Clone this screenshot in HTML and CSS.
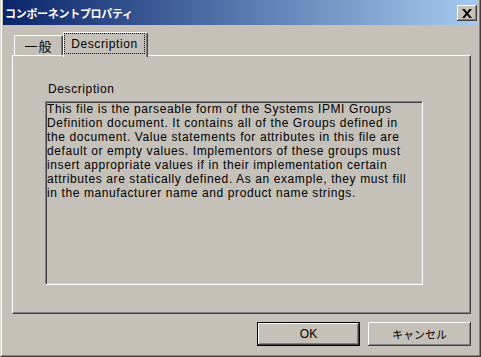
FILE: index.html
```html
<!DOCTYPE html>
<html lang="ja">

<head>
    <meta charset="UTF-8">
    <title>コンポーネントプロパティ</title>
    <link rel="stylesheet" href="styles.css">
</head>

<body>
    <div class="window">
        <div class="frame">
            <div class="titlebar">
                <span class="title">コンポーネントプロパティ</span>
                <button class="close" aria-label="閉じる">
                    <svg width="10" height="9" viewBox="0 0 10 9">
                        <path d="M0 0h2.5l2.5 3 2.5-3h2.5l-3.7 4.5 3.7 4.5h-2.5l-2.5-3-2.5 3h-2.5l3.7-4.5z" fill="#000" />
                    </svg>
                </button>
            </div>
            <div class="tabs">
                <div class="tab">一般</div>
                <div class="tab active"><span class="focus">Description</span></div>
            </div>
            <div class="panel">
                <div class="label">Description</div>
                <div class="textbox">This file is the parseable form of the Systems IPMI Groups<br>Definition document. It contains all of the Groups defined in<br>the document. Value statements for attributes in this file are<br>default or empty values. Implementors of these groups must<br>insert appropriate values if in their implementation certain<br>attributes are statically defined. As an example, they must fill<br>in the manufacturer name and product name strings.</div>
            </div>
            <div class="buttons">
                <button class="btn default">OK</button>
                <button class="btn jp">キャンセル</button>
            </div>
        </div>
    </div>
</body>

</html>
```

FILE: styles.css
```css
* {
    margin: 0;
    padding: 0;
    box-sizing: border-box;
}

body {
    background: #c5c1b9;
    font-family: "Liberation Sans", "Noto Sans CJK JP", sans-serif;
    font-size: 12px;
    letter-spacing: 0.6px;
    color: #000;
}

.window {
    width: 481px;
    height: 357px;
    border-left: 1px solid #d9d6d0;
    border-right: 1px solid #404040;
    border-bottom: 1px solid #404040;
}

.frame {
    height: 100%;
    display: flex;
    flex-direction: column;
    border-left: 1px solid #fff;
    border-right: 1px solid #808080;
    border-bottom: 1px solid #808080;
    padding: 0 1px 1px;
}

/* 标题栏 */
.titlebar {
    height: 25px;
    display: flex;
    justify-content: space-between;
    align-items: flex-start;
    padding: 2px 1px 0 2px;
    background: linear-gradient(to right, #0a246a, #a6caf0);
}

.titlebar .title {
    line-height: 23px;
    font-family: "Noto Sans CJK JP", sans-serif;
    font-size: 11px;
    font-weight: bold;
    letter-spacing: -0.3px;
    color: #fff;
}

.titlebar .close {
    width: 20px;
    height: 16px;
    margin-top: 3px;
    border: none;
    background: #c5c1b9;
    display: flex;
    align-items: center;
    justify-content: center;
    box-shadow: inset -1px -1px #404040, inset 1px 1px #fff, inset -2px -2px #808080;
}

/* 选项卡 */
.tabs {
    display: flex;
    height: 25px;
    margin: 7px 0 -2px 11px;
    position: relative;
    z-index: 1;
}

.tab {
    background: #c5c1b9;
    border-top: 1px solid #fff;
    border-left: 1px solid #fff;
    border-right: 1px solid #404040;
    border-radius: 2px 2px 0 0;
    box-shadow: inset -1px 0 #808080;
}

.tabs .tab:first-child {
    width: 49px;
    height: 20px;
    margin-top: 3px;
    line-height: 19px;
    text-align: center;
    font-family: "Noto Sans CJK JP", sans-serif;
    font-size: 13px;
    letter-spacing: 1px;
}

.tab.active {
    width: 85px;
    height: 25px;
    padding: 0 2px 0 0;
}

.tab.active .focus {
    display: flex;
    align-items: center;
    justify-content: center;
    height: 21px;
    border: 1px dotted #000;
}

/* 面板 */
.panel {
    height: 259px;
    margin: 0 7px 0 9px;
    padding: 26px 0 0 32px;
    border-top: 1px solid #fff;
    border-left: 1px solid #fff;
    border-right: 1px solid #404040;
    border-bottom: 1px solid #404040;
    box-shadow: inset -1px -1px #808080;
}

.panel .label {
    line-height: 14px;
    margin: 0 0 5px 3px;
}

.panel .textbox {
    width: 378px;
    height: 184px;
    padding: 0 1px;
    line-height: 14px;
    white-space: nowrap;
    border-top: 1px solid #808080;
    border-left: 1px solid #808080;
    border-right: 1px solid #fff;
    border-bottom: 1px solid #fff;
    box-shadow: inset 1px 1px #404040, inset -1px -1px #d4d0c8;
}

/* 按钮 */
.buttons {
    display: flex;
    justify-content: flex-end;
    gap: 8px;
    margin: 8px 7px 0 0;
}

.btn {
    width: 103px;
    height: 24px;
    border: none;
    background: #c5c1b9;
    font-family: "Liberation Sans", "Noto Sans CJK JP", sans-serif;
    font-size: 12px;
    color: #000;
    box-shadow: inset -1px -1px #404040, inset 1px 1px #fff, inset -2px -2px #808080;
}

.btn.default {
    border: 1px solid #000;
}

.btn.jp {
    font-family: "Noto Sans CJK JP", sans-serif;
    font-size: 11px;
    letter-spacing: 0;
}
```
